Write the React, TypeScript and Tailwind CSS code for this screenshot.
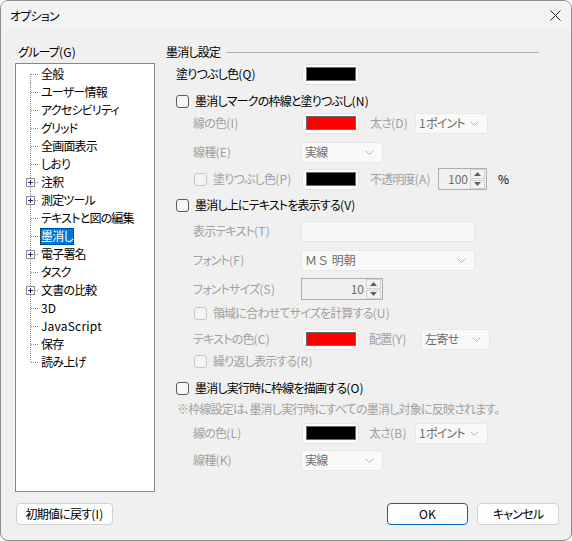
import React from 'react';

const base =
  "font-['Noto_Sans_CJK_JP','Noto_Sans',sans-serif] [font-feature-settings:'palt'] text-[12px] leading-[16px] tracking-[-0.8px]";

// Latin runs keep normal spacing, Japanese runs are set tighter (closer to Yu Gothic UI)
function Txt({ children }: { children: string }) {
  const parts = children.match(/[\x20-\x7e]+|[^\x20-\x7e]+/g) || [];
  return (
    <>
      {parts.map((p, i) =>
        /^[\x20-\x7e]+$/.test(p) ? (
          <span key={i} className="tracking-[0.2px]">
            {p}
          </span>
        ) : (
          <span key={i}>{p}</span>
        )
      )}
    </>
  );
}

const treeItems = [
  { t: '全般' },
  { t: 'ユーザー情報' },
  { t: 'アクセシビリティ' },
  { t: 'グリッド' },
  { t: '全画面表示' },
  { t: 'しおり' },
  { t: '注釈', plus: true },
  { t: '測定ツール', plus: true },
  { t: 'テキストと図の編集' },
  { t: '墨消し', sel: true },
  { t: '電子署名', plus: true },
  { t: 'タスク' },
  { t: '文書の比較', plus: true },
  { t: '3D' },
  { t: 'JavaScript' },
  { t: '保存' },
  { t: '読み上げ' },
];

function Connector({ first, last, plus }: { first: boolean; last: boolean; plus?: boolean }) {
  return (
    <svg width="24" height="18" className="shrink-0" shapeRendering="crispEdges">
      <line x1="14.5" y1={first ? 9 : 0} x2="14.5" y2={last ? 10 : 18} stroke="#8c8c8c" strokeDasharray="1 1" />
      <line x1="15" y1="9.5" x2="23" y2="9.5" stroke="#8c8c8c" strokeDasharray="1 1" />
      {plus && (
        <g>
          <rect x="10.5" y="5.5" width="8" height="8" fill="#fbfbfb" stroke="#8f8f8f" />
          <line x1="12" y1="9.5" x2="17" y2="9.5" stroke="#1c2f6b" />
          <line x1="14.5" y1="7" x2="14.5" y2="12" stroke="#1c2f6b" />
        </g>
      )}
    </svg>
  );
}

function Checkbox({ disabled }: { disabled?: boolean }) {
  return (
    <div
      className={
        disabled
          ? 'w-[13px] h-[13px] shrink-0 rounded-[3px] border border-[#c6c6c6] bg-[#f4f4f4]'
          : 'w-[13px] h-[13px] shrink-0 rounded-[3px] border border-[#5c5c5c] bg-[#f7f7f7]'
      }
    />
  );
}

function Swatch({ color }: { color: string }) {
  return (
    <div className="ml-[1px] w-[57px] h-[21px] shrink-0 rounded-[4px] border border-[#e3e3e3] bg-[#fcfcfc] flex items-center justify-center">
      <div className="w-[50px] h-[14px] border border-[#6a6a6a]" style={{ backgroundColor: color }} />
    </div>
  );
}

function Chevron() {
  return (
    <svg width="9" height="5" viewBox="0 0 9 5" className="shrink-0">
      <path d="M0.5 0.5 L4.5 4.5 L8.5 0.5" fill="none" stroke="#b4b4b4" strokeWidth="1" />
    </svg>
  );
}

function Dropdown({ value, w }: { value: React.ReactNode; w: string }) {
  return (
    <div
      className={`${w} h-[21px] shrink-0 rounded-[3px] border border-[#e8e8e8] bg-[#f9f9f9] flex items-center justify-between pl-[3px] pr-[8px] text-[#6d6d6d]`}
    >
      <span>{value}</span>
      <Chevron />
    </div>
  );
}

function Spin({ value, w }: { value: string; w: string }) {
  return (
    <div className={`${w} h-[22px] shrink-0 border border-[#adadad] bg-[#f0f0f0] flex items-center justify-end text-[#6d6d6d] tracking-normal`}>
      <span className="pr-[2px]">{value}</span>
      <div className="w-[15px] h-[20px] flex flex-col gap-px mr-px">
        <div className="flex-1 border border-[#d2d2d2] bg-[#f3f3f3] flex items-center justify-center">
          <svg width="7" height="4" viewBox="0 0 7 4">
            <path d="M0 4 L3.5 0 L7 4 Z" fill="#606060" />
          </svg>
        </div>
        <div className="flex-1 border border-[#d2d2d2] bg-[#f3f3f3] flex items-center justify-center">
          <svg width="7" height="4" viewBox="0 0 7 4">
            <path d="M0 0 L3.5 4 L7 0 Z" fill="#606060" />
          </svg>
        </div>
      </div>
    </div>
  );
}

function SubLabel({ children }: { children: string }) {
  return (
    <div className="w-[135px] shrink-0 pl-[27px] text-[#a0a0a0]">
      <Txt>{children}</Txt>
    </div>
  );
}

function Button({ children, w, primary }: { children: string; w: string; primary?: boolean }) {
  return (
    <div
      className={`${w} h-[22px] rounded-[4px] border ${
        primary ? 'border-[#0067c0]' : 'border-[#d0d0d0]'
      } bg-[#fdfdfd] flex items-center justify-center text-black`}
    >
      <span>
        <Txt>{children}</Txt>
      </span>
    </div>
  );
}

export default function App() {
  return (
    <div className={`${base} w-[572px] h-[541px] rounded-[8px] border border-[#8e8e8e] bg-[#f0f0f0] overflow-hidden flex flex-col text-black`}>
      {/* Title bar */}
      <div className="h-[29px] shrink-0 bg-[#f3f3f3] flex items-center justify-between pl-[9px] pr-[10px]">
        <span>オプション</span>
        <svg width="11" height="11" viewBox="0 0 11 11">
          <path d="M0.5 0.5 L10.5 10.5 M10.5 0.5 L0.5 10.5" stroke="#1a1a1a" strokeWidth="1" />
        </svg>
      </div>

      {/* Body */}
      <div className="flex pl-[14px] pt-[14px]">
        {/* Group tree */}
        <div className="w-[140px] shrink-0 flex flex-col">
          <div className="h-[16px] pl-[3px]">
            <Txt>グループ(G)</Txt>
          </div>
          <div className="mt-[3px] h-[429px] border border-[#828790] bg-white pt-[1px]">
            {treeItems.map((it, i) => (
              <div key={it.t} className="flex items-center h-[18px]">
                <Connector first={i === 0} last={i === treeItems.length - 1} plus={it.plus} />
                <span
                  className={
                    it.sel
                      ? 'px-[1px] h-[17px] flex items-center bg-[#0078d7] text-white outline-1 outline-dotted outline-[#1a1a1a] -outline-offset-1'
                      : 'px-[1px] h-[17px] flex items-center'
                  }
                >
                  <span>
                    <Txt>{it.t}</Txt>
                  </span>
                </span>
              </div>
            ))}
          </div>
        </div>

        {/* Settings */}
        <div className="ml-[11px] w-[373px] flex flex-col">
          <div className="h-[16px] flex items-center gap-[6px]">
            <span>墨消し設定</span>
            <div className="flex-1 h-px bg-[#b0b0b0]" />
          </div>

          <div className="mt-[3px] h-[22px] flex items-center">
            <div className="w-[135px] shrink-0 pl-[10px]">
              <Txt>塗りつぶし色(Q)</Txt>
            </div>
            <Swatch color="#000000" />
          </div>

          <div className="mt-[8px] h-[16px] flex items-center pl-[10px] gap-[6px]">
            <Checkbox />
            <span>
              <Txt>墨消しマークの枠線と塗りつぶし(N)</Txt>
            </span>
          </div>

          <div className="mt-[3px] h-[22px] flex items-center">
            <SubLabel>線の色(I)</SubLabel>
            <Swatch color="#ff0000" />
            <span className="ml-[11px] w-[45px] shrink-0 text-[#a0a0a0]">
              <Txt>太さ(D)</Txt>
            </span>
            <Dropdown value={<Txt>1ポイント</Txt>} w="w-[73px]" />
          </div>

          <div className="mt-[7px] h-[22px] flex items-center">
            <SubLabel>線種(E)</SubLabel>
            <Dropdown value="実線" w="w-[82px]" />
          </div>

          <div className="mt-[5px] h-[22px] flex items-center">
            <div className="w-[135px] shrink-0 pl-[28px] flex items-center gap-[6px] text-[#a0a0a0]">
              <Checkbox disabled />
              <span>
                <Txt>塗りつぶし色(P)</Txt>
              </span>
            </div>
            <Swatch color="#000000" />
            <span className="ml-[11px] w-[68px] shrink-0 text-[#a0a0a0]">
              <Txt>不透明度(A)</Txt>
            </span>
            <Spin value="100" w="w-[49px]" />
            <span className="ml-[11px] tracking-normal">%</span>
          </div>

          <div className="mt-[7px] h-[16px] flex items-center pl-[10px] gap-[6px]">
            <Checkbox />
            <span>
              <Txt>墨消し上にテキストを表示する(V)</Txt>
            </span>
          </div>

          <div className="mt-[7px] h-[22px] flex items-center">
            <SubLabel>表示テキスト(T)</SubLabel>
            <div className="w-[174px] h-[21px] shrink-0 border border-[#e3e3e3] bg-[#f7f7f7]" />
          </div>

          <div className="mt-[7px] h-[22px] flex items-center">
            <SubLabel>フォント(F)</SubLabel>
            <Dropdown
              value={<span className="[font-feature-settings:normal] tracking-normal">ＭＳ 明朝</span>}
              w="w-[174px]"
            />
          </div>

          <div className="mt-[7px] h-[22px] flex items-center">
            <SubLabel>フォントサイズ(S)</SubLabel>
            <Spin value="10" w="w-[82px]" />
          </div>

          <div className="mt-[5px] h-[16px] flex items-center pl-[28px] gap-[6px] text-[#a0a0a0]">
            <Checkbox disabled />
            <span>
              <Txt>領域に合わせてサイズを計算する(U)</Txt>
            </span>
          </div>

          <div className="mt-[7px] h-[22px] flex items-center">
            <SubLabel>テキストの色(C)</SubLabel>
            <Swatch color="#ff0000" />
            <span className="ml-[10px] w-[52px] shrink-0 text-[#a0a0a0]">
              <Txt>配置(Y)</Txt>
            </span>
            <Dropdown value="左寄せ" w="w-[69px]" />
          </div>

          <div className="mt-[3px] h-[16px] flex items-center pl-[28px] gap-[6px] text-[#a0a0a0]">
            <Checkbox disabled />
            <span>
              <Txt>繰り返し表示する(R)</Txt>
            </span>
          </div>

          <div className="mt-[11px] h-[16px] flex items-center pl-[10px] gap-[6px]">
            <Checkbox />
            <span>
              <Txt>墨消し実行時に枠線を描画する(O)</Txt>
            </span>
          </div>

          <div className="mt-[5px] h-[16px] flex items-center pl-[11px] text-[#a0a0a0] whitespace-nowrap">
            ※枠線設定は、墨消し実行時にすべての墨消し対象に反映されます。
          </div>

          <div className="mt-[5px] h-[22px] flex items-center">
            <SubLabel>線の色(L)</SubLabel>
            <Swatch color="#000000" />
            <span className="ml-[10px] w-[46px] shrink-0 text-[#a0a0a0]">
              <Txt>太さ(B)</Txt>
            </span>
            <Dropdown value={<Txt>1ポイント</Txt>} w="w-[73px]" />
          </div>

          <div className="mt-[5px] h-[22px] flex items-center">
            <SubLabel>線種(K)</SubLabel>
            <Dropdown value="実線" w="w-[82px]" />
          </div>
        </div>
      </div>

      {/* Footer */}
      <div className="mt-[11px] flex items-center pl-[15px] pr-[12px]">
        <Button w="w-[97px]">初期値に戻す(I)</Button>
        <div className="flex-1" />
        <Button w="w-[81px]" primary>
          OK
        </Button>
        <div className="w-[9px]" />
        <Button w="w-[82px]">キャンセル</Button>
      </div>
    </div>
  );
}
